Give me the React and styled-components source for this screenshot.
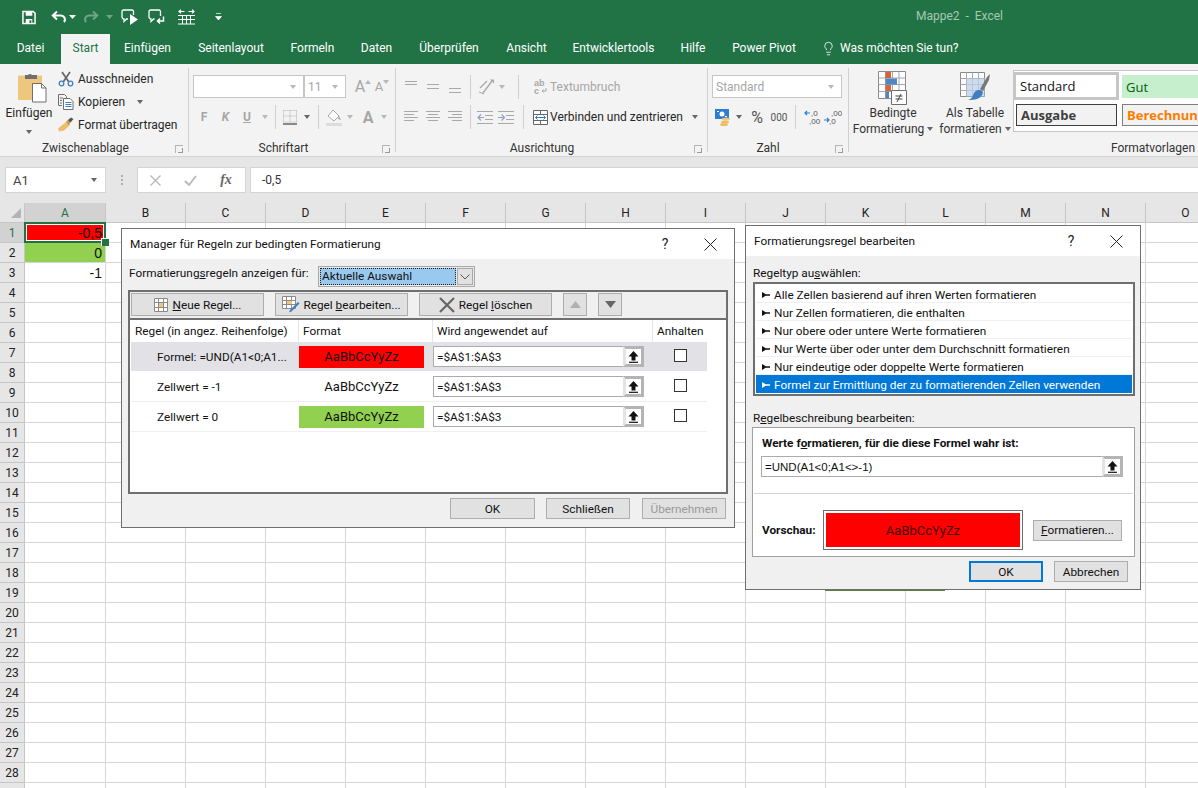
import React from "react";
import styled, { createGlobalStyle } from "styled-components";
import { Lightbulb } from "lucide-react";

const UI_FONT = `Roboto, "Open Sans", sans-serif`;

const GlobalStyle = createGlobalStyle`
  html, body {
    margin: 0;
    padding: 0;
    background: #fff;
    font-family: ${UI_FONT};
    font-size: 12px;
    color: #262626;
    overflow: hidden;
  }
  * { box-sizing: border-box; }
`;

const Page = styled.div`
  position: relative;
  width: 1198px;
  height: 788px;
  overflow: hidden;
`;

/* ---------- title + tabs ---------- */

const TitleBar = styled.div`
  height: 34px;
  background: #217346;
  display: flex;
  align-items: center;
  color: #fff;
`;

const QuickSlot = styled.div`
  width: ${(p) => p.$w}px;
  padding-left: ${(p) => p.$pl || 0}px;
  display: flex;
  justify-content: center;
  align-items: center;
  opacity: ${(p) => (p.$dim ? 0.35 : 1)};
`;

const WindowTitle = styled.div`
  margin-left: auto;
  margin-right: 195px;
  padding-bottom: 2px;
  color: #a6c9b5;
  white-space: pre;
  font-size: 12px;
`;

const TabBar = styled.div`
  height: 30px;
  background: #217346;
  display: flex;
  align-items: stretch;
`;

const Tab = styled.div`
  width: ${(p) => p.$w}px;
  display: flex;
  align-items: center;
  justify-content: center;
  padding-bottom: 2px;
  white-space: nowrap;
  color: ${(p) => (p.$active ? "#217346" : "#fff")};
  background: ${(p) => (p.$active ? "#f3f3f3" : "transparent")};
`;

const TellMe = styled.div`
  margin-left: 12px;
  display: flex;
  align-items: center;
  gap: 4px;
  padding-bottom: 2px;
  color: #fff;
  white-space: nowrap;
`;

/* ---------- ribbon ---------- */

const Ribbon = styled.div`
  height: 93px;
  background: #f3f3f3;
  border-bottom: 1px solid #d2d2d2;
  display: flex;
  overflow: hidden;
`;

const Group = styled.div`
  position: relative;
  flex: 0 0 ${(p) => p.$w}px;
  min-width: 0;
  height: 92px;
  display: flex;
  flex-direction: column;
  &::after {
    content: "";
    display: ${(p) => (p.$noLine ? "none" : "block")};
    position: absolute;
    right: 0;
    top: 4px;
    bottom: 4px;
    width: 1px;
    background: #d0d0d0;
  }
`;

const GroupBody = styled.div`
  flex: 1;
  display: flex;
  min-height: 0;
`;

const GroupLabel = styled.div`
  height: 18px;
  line-height: 20px;
  text-align: center;
  color: #333;
  white-space: nowrap;
  padding-right: ${(p) => p.$pr || 0}px;
  padding-left: ${(p) => p.$pl || 0}px;
`;

const Launcher = styled.div`
  position: absolute;
  right: 6px;
  bottom: 3px;
  width: 8px;
  height: 8px;
  border: 1px solid #b5b5b5;
  border-width: 1px 0 0 1px;
  &::after {
    content: "";
    position: absolute;
    right: 0;
    bottom: 0;
    width: 4px;
    height: 4px;
    border: 1px solid #9a9a9a;
    border-width: 0 1px 1px 0;
  }
`;

const Caret = styled.span`
  display: inline-block;
  width: 0;
  height: 0;
  margin-left: ${(p) => p.$ml || 0}px;
  border-left: 3.5px solid transparent;
  border-right: 3.5px solid transparent;
  border-top: 4px solid ${(p) => (p.$dim ? "#b8b8b8" : "#666")};
`;

const PasteButton = styled.div`
  width: 58px;
  display: flex;
  flex-direction: column;
  align-items: center;
  padding-top: 7px;
  color: #262626;
  & > svg { margin-left: 6px; }
`;

const PasteLabel = styled.div`
  margin-top: 2px;
  line-height: 17px;
`;

const PasteCaret = styled.div`
  line-height: 10px;
  margin-top: 3px;
`;

const ClipActions = styled.div`
  display: flex;
  flex-direction: column;
  padding-top: 3px;
`;

const ClipAction = styled.div`
  height: 23px;
  display: flex;
  align-items: center;
  gap: 4px;
  white-space: nowrap;
  & > svg:first-child { flex: 0 0 16px; }
`;

const ToolStack = styled.div`
  display: flex;
  flex-direction: column;
  padding: 11px 0 0 ${(p) => p.$pl || 0}px;
`;

const ToolRow = styled.div`
  height: ${(p) => p.$h || 23}px;
  margin-top: ${(p) => p.$mt || 0}px;
  display: flex;
  align-items: center;
`;

const Slot = styled.div`
  flex: 0 0 ${(p) => p.$w}px;
  height: 100%;
  display: flex;
  align-items: center;
  justify-content: center;
  color: ${(p) => (p.$dim ? "#a6a6a6" : "#555")};
  font-weight: ${(p) => (p.$bold ? 700 : 400)};
  font-style: ${(p) => (p.$italic ? "italic" : "normal")};
  text-decoration: ${(p) => (p.$under ? "underline" : "none")};
  font-size: ${(p) => p.$fs || 12}px;
`;

const RowSep = styled.div`
  flex: 0 0 ${(p) => p.$w}px;
  height: 24px;
  position: relative;
  &::after {
    content: "";
    position: absolute;
    left: 50%;
    top: 0;
    bottom: 0;
    width: 1px;
    background: #d0d0d0;
  }
`;

const RibbonBox = styled.div`
  width: ${(p) => p.$w}px;
  height: 23px;
  background: #fff;
  border: 1px solid #c6c6c6;
  display: flex;
  align-items: center;
  justify-content: space-between;
  padding: 0 7px 0 3px;
  color: #a6a6a6;
`;

const WrapText = styled.div`
  color: #a6a6a6;
  white-space: nowrap;
`;

const MergeText = styled.div`
  color: #262626;
  white-space: nowrap;
`;

const BigButton = styled.div`
  flex: 0 0 ${(p) => p.$w}px;
  display: flex;
  flex-direction: column;
  align-items: center;
  padding-top: ${(p) => p.$pt || 6}px;
  line-height: 16px;
  color: #333;
  white-space: nowrap;
`;

const BigLine = styled.div`
  display: flex;
  align-items: center;
  gap: 3px;
  margin-top: ${(p) => p.$mt || 0}px;
`;

const Gallery = styled.div`
  margin-top: 6px;
  flex: 1;
  height: 62px;
  background: #fff;
  border: 1px solid #c6c6c6;
  border-right: 0;
  display: grid;
  grid-template-columns: 106px 110px;
  grid-template-rows: 30px 28px;
  overflow: hidden;
`;

const StyleCell = styled.div`
  margin: ${(p) => p.$m};
  padding-left: 4px;
  display: flex;
  align-items: center;
  white-space: nowrap;
  font-family: "Open Sans", sans-serif;
  font-size: 13px;
  font-weight: ${(p) => (p.$bold ? 700 : 400)};
  color: ${(p) => p.$color};
  background: ${(p) => p.$bg};
  border: ${(p) => p.$border};
`;

/* ---------- formula bar ---------- */

const FormulaArea = styled.div`
  height: 46px;
  background: #e6e6e6;
  padding-top: 10px;
  display: flex;
  align-items: flex-start;
`;

const NameBox = styled.div`
  margin-left: 5px;
  width: 101px;
  height: 26px;
  background: #fff;
  border: 1px solid #d4d4d4;
  display: flex;
  align-items: center;
  justify-content: space-between;
  padding: 0 8px 0 7px;
  font-size: 13px;
  color: #444;
`;

const Dots = styled.div`
  width: 31px;
  height: 26px;
  display: flex;
  flex-direction: column;
  align-items: center;
  justify-content: center;
  gap: 2px;
  & > i {
    width: 2px;
    height: 2px;
    background: #b0b0b0;
  }
`;

const FxBox = styled.div`
  width: 109px;
  height: 26px;
  background: #fff;
  border: 1px solid #d4d4d4;
  display: flex;
  align-items: center;
`;

const FxSlot = styled.div`
  flex: 0 0 ${(p) => p.$w}px;
  display: flex;
  justify-content: center;
  align-items: center;
`;

const FxText = styled.span`
  font-family: "Liberation Serif", serif;
  font-style: italic;
  font-weight: 700;
  font-size: 14px;
  color: #666;
`;

const FormulaInput = styled.div`
  margin-left: 4px;
  flex: 1;
  height: 26px;
  background: #fff;
  border: 1px solid #d4d4d4;
  border-right: 0;
  display: flex;
  align-items: center;
  padding-left: 11px;
  color: #333;
`;

/* ---------- sheet ---------- */

const Sheet = styled.div`
  display: grid;
  grid-template-columns: 25px 81px repeat(14, 80px);
  grid-auto-rows: 20px;
  background: #fff;
`;

const Corner = styled.div`
  background: #e6e6e6;
  border-right: 1px solid #c6c6c6;
  border-bottom: 1px solid #c6c6c6;
  position: relative;
  &::after {
    content: "";
    position: absolute;
    right: 3px;
    bottom: 4px;
    width: 0;
    height: 0;
    border-left: 10px solid transparent;
    border-bottom: 10px solid #b4b4b4;
  }
`;

const ColHead = styled.div`
  background: ${(p) => (p.$active ? "#d2d2d2" : "#e6e6e6")};
  color: ${(p) => (p.$active ? "#217346" : "#222")};
  border-right: 1px solid #c6c6c6;
  border-bottom: 1px solid #c6c6c6;
  display: flex;
  align-items: center;
  justify-content: center;
  font-size: 12px;
`;

const RowHead = styled(ColHead)``;

const Cell = styled.div`
  border-right: 1px solid #d6d6d6;
  border-bottom: 1px solid #d6d6d6;
  background: ${(p) => p.$bg || "#fff"};
  display: flex;
  align-items: center;
  justify-content: flex-end;
  padding-right: 3px;
  font-family: "Liberation Sans", sans-serif;
  font-size: 14px;
  color: #111;
`;

const ActiveCell = styled(Cell)`
  position: relative;
  z-index: 1;
  &::before {
    content: "";
    position: absolute;
    inset: -1px;
    border: 2px solid #217346;
    outline: 1px solid #fff;
    outline-offset: -3px;
  }
  &::after {
    content: "";
    position: absolute;
    right: -4px;
    bottom: -4px;
    width: 7px;
    height: 7px;
    background: #217346;
    border: 1px solid #fff;
    border-width: 1px 0 0 1px;
  }
`;

/* ---------- dialogs ---------- */

const Dialog = styled.div`
  position: absolute;
  left: ${(p) => p.$left}px;
  top: ${(p) => p.$top}px;
  width: ${(p) => p.$w}px;
  height: ${(p) => p.$h}px;
  background: #f0f0f0;
  border: 1px solid #6f6f6f;
  font-size: 11.8px;
  z-index: 5;
  display: flex;
  flex-direction: column;
`;

const DialogTitle = styled.div`
  flex: 0 0 30px;
  background: #fff;
  display: flex;
  align-items: center;
  padding-left: 8px;
  color: #111;
`;

const TitleText = styled.div`
  flex: 1;
`;

const HelpMark = styled.div`
  width: 20px;
  margin-right: 11px;
  text-align: center;
  font-size: 14px;
  color: #222;
`;

const CloseSlot = styled.div`
  width: 48px;
  display: flex;
  justify-content: center;
`;

const Key = styled.span`
  text-decoration: underline;
`;

const FilterRow = styled.div`
  flex: 0 0 31px;
  display: flex;
  align-items: flex-start;
  padding: 7px 0 0 7px;
  color: #111;
  white-space: nowrap;
`;

const FilterLabel = styled.div`
  width: 189px;
  line-height: 14px;
`;

const FilterSelect = styled.div`
  width: 157px;
  height: 21px;
  border: 1px solid #a9a9a9;
  background: #e8e8e8;
  display: flex;
  padding: 1px;
`;

const FilterValue = styled.div`
  flex: 1;
  background: #99c9ef;
  outline: 1px dotted #222;
  outline-offset: -1px;
  padding-left: 2px;
  line-height: 17px;
  color: #111;
`;

const FilterArrow = styled.div`
  width: 16px;
  margin-left: 1px;
  background: #e1e1e1;
  border: 1px solid #a9a9a9;
  display: flex;
  align-items: center;
  justify-content: center;
`;

const RuleBox = styled.div`
  margin: 0 6px;
  height: 204px;
  flex: none;
  border: 2px solid #6f6f6f;
  display: flex;
  flex-direction: column;
`;

const RuleToolbar = styled.div`
  height: 28px;
  flex: none;
  display: flex;
  align-items: flex-start;
  padding: 1px 0 0 1px;
  border-bottom: 2px solid #6f6f6f;
`;

const DlgButton = styled.div`
  width: ${(p) => p.$w}px;
  height: ${(p) => p.$h || 21}px;
  margin-left: ${(p) => p.$ml || 0}px;
  flex: none;
  background: #e1e1e1;
  border: ${(p) => (p.$focus ? "2px solid #0078d7" : "1px solid #adadad")};
  display: flex;
  align-items: center;
  justify-content: center;
  gap: ${(p) => p.$gap || 0}px;
  color: ${(p) => (p.$off ? "#9a9a9a" : "#111")};
  white-space: nowrap;
`;

const RuleList = styled.div`
  flex: 1;
  background: #fff;
  padding-left: 1px;
`;

const RuleGrid = styled.div`
  width: 576px;
  display: grid;
  grid-template-columns: 168px 134px 220px 54px;
`;

const HeadCell = styled.div`
  height: 22px;
  padding-left: 4px;
  display: flex;
  align-items: center;
  border-right: ${(p) => (p.$last ? "0" : "1px solid #e4e4e4")};
  color: #111;
  white-space: nowrap;
`;

const RuleRow = styled.div`
  grid-column: 1 / -1;
  height: 30px;
  display: grid;
  grid-template-columns: subgrid;
  align-items: center;
  background: ${(p) => (p.$selected ? "#e1e1e6" : "#fff")};
  border-bottom: 1px solid ${(p) => (p.$selected ? "#fff" : "#efefef")};
`;

const RuleName = styled.div`
  padding-left: 26px;
  color: #111;
  white-space: nowrap;
`;

const Sample = styled.div`
  width: 125px;
  height: 22px;
  display: flex;
  align-items: center;
  justify-content: center;
  background: ${(p) => p.$bg || "transparent"};
  color: #111;
  font-size: 13px;
`;

const RefInput = styled.div`
  width: ${(p) => p.$w}px;
  height: 21px;
  flex: none;
  margin-left: ${(p) => p.$ml || 0}px;
  background: #fff;
  border: 1px solid #ababab;
  display: flex;
  align-items: center;
  padding-left: 3px;
  color: #111;
  font-family: ${(p) => (p.$plain ? `"Liberation Sans", sans-serif` : "inherit")};
  font-size: ${(p) => (p.$plain ? "11.5px" : "inherit")};
`;

const RefText = styled.div`
  flex: 1;
  white-space: nowrap;
`;

const RefPick = styled.div`
  width: 21px;
  height: 21px;
  margin-right: -1px;
  background: #fff;
  border: 3px solid #b4b4b4;
  border-left-color: #e4e4e4;
  display: flex;
  align-items: center;
  justify-content: center;
`;

const Tick = styled.div`
  width: 13px;
  height: 13px;
  margin-left: 21px;
  margin-bottom: 2px;
  background: #fff;
  border: 1px solid #333;
`;

const DialogFooter = styled.div`
  display: flex;
  justify-content: flex-end;
  padding: ${(p) => p.$pad};
`;

const FieldLabel = styled.div`
  margin: ${(p) => p.$m};
  line-height: 16px;
  color: #111;
`;

const TypeList = styled.div`
  margin: 1px 0 0 7px;
  width: 382px;
  height: 114px;
  flex: none;
  background: #fff;
  border: 2px solid #6f6f6f;
  padding: 1px 1px 0;
`;

const TypeRow = styled.div`
  height: 18px;
  display: flex;
  align-items: center;
  padding: 2px 0 0 6px;
  gap: 4px;
  white-space: nowrap;
  color: ${(p) => (p.$selected ? "#fff" : "#111")};
  background: ${(p) => (p.$selected ? "#0078d7" : "#fff")};
  border-bottom: 1px solid ${(p) => (p.$selected ? "#0078d7" : "#f0f0f0")};
`;

const DescBox = styled.div`
  margin: 1px 0 0 6px;
  width: 383px;
  height: 130px;
  flex: none;
  background: #fff;
  border: 1px solid #a0a0a0;
  display: flex;
  flex-direction: column;
`;

const DescTitle = styled.div`
  padding: 7px 0 0 9px;
  line-height: 16px;
  font-weight: 700;
  color: #111;
`;

const DescRule = styled.div`
  height: 1px;
  margin: 16px 1px 0;
  background: #d4d4d4;
`;

const DescInput = styled(RefInput)`
  margin-top: 5px;
`;

const PreviewRow = styled.div`
  display: flex;
  align-items: center;
  padding: 16px 0 0 9px;
`;

const PreviewLabel = styled.div`
  width: 61px;
  font-weight: 700;
  color: #111;
`;

const PreviewFrame = styled.div`
  width: 200px;
  height: 40px;
  padding: 2px;
  background: #fff;
  border: 1px solid #6f6f6f;
  margin-right: 10px;
`;

const PreviewFill = styled.div`
  height: 100%;
  background: #f00;
  display: flex;
  align-items: center;
  justify-content: center;
  color: #400;
  font-size: 13px;
`;

const PartialEdge = styled.div`
  position: absolute;
  left: 825px;
  top: 590px;
  width: 120px;
  height: 1px;
  background: #5f7f3f;
  z-index: 4;
`;

/* ---------- icons ---------- */

const SaveIcon = () => (
  <svg width="15" height="15" viewBox="0 0 15 15">
    <path d="M1 1h11l2 2v11H1z" fill="none" stroke="#fff" strokeWidth="1.6" />
    <path d="M4 1.500h7v4H4zM4 9h7v5H4z" fill="#fff" />
    <path d="M8 10.500h2v3H8z" fill="#217346" />
  </svg>
);

const UndoIcon = () => (
  <svg width="16" height="14" viewBox="0 0 16 14">
    <path d="M6 1.500 1.800 5.500 6 9.500M2.500 5.500h7a4 4 0 0 1 3.500 6.500" fill="none" stroke="#fff" strokeWidth="2" />
  </svg>
);

const RedoIcon = () => (
  <svg width="16" height="14" viewBox="0 0 16 14">
    <path d="M10 1.500 14.200 5.500 10 9.500M13.500 5.500h-7A4 4 0 0 0 3 12" fill="none" stroke="#fff" strokeWidth="2" />
  </svg>
);

const CommentPlayIcon = () => (
  <svg width="18" height="16" viewBox="0 0 18 16">
    <path d="M2.500 1h8.500a1.500 1.500 0 0 1 1.500 1.500V6M7 10H5.500L3 12.500V10A2 2 0 0 1 1 8V2.500A1.500 1.500 0 0 1 2.500 1" fill="none" stroke="#fff" strokeWidth="1.300" />
    <path d="M9 5l8 5.500-8 5.500z" fill="#fff" />
  </svg>
);

const CommentBackIcon = () => (
  <svg width="18" height="16" viewBox="0 0 18 16">
    <path d="M2.500 1h8.500A1.500 1.500 0 0 1 12.500 2.500V7M6.500 10H5.500L3 12.500V10A2 2 0 0 1 1 8V2.500A1.500 1.500 0 0 1 2.500 1" fill="none" stroke="#fff" strokeWidth="1.300" />
    <path d="M15.500 7.500v4.500H10M12 9.500 9.500 12l2.500 2.500" fill="none" stroke="#fff" strokeWidth="1.500" />
  </svg>
);

const TableArrowsIcon = () => (
  <svg width="17" height="16" viewBox="0 0 17 16">
    <path d="M0 6.500h17M0 10.500h17M0 15h17M4.500 6.500V15M8.500 6.500V15M12.500 6.500V15" stroke="#fff" fill="none" />
    <path d="M1 2.500h5.500M3 .7 1 2.500l2 1.800M16 2.500h-5.500M14 .7l2 1.800-2 1.800" stroke="#fff" fill="none" strokeWidth="1.200" />
  </svg>
);

const QatMoreIcon = () => (
  <svg width="7" height="8" viewBox="0 0 7 8">
    <path d="M1 .5h5M.5 3.500h6l-3 3.500z" fill="#fff" stroke="#fff" strokeWidth=".7" />
  </svg>
);

const WhiteCaret = () => (
  <svg width="7" height="4" viewBox="0 0 7 4">
    <path d="M0 0h7L3.500 4z" fill="#fff" />
  </svg>
);

const PasteIcon = () => (
  <svg width="30" height="32" viewBox="0 0 30 32">
    <path d="M1 4.500h24V29H1z" fill="#eec77e" />
    <path d="M8 4h3a2.500 2.500 0 0 1 4 0h5v4H8z" fill="#6f6f6f" />
    <path d="M15.500 12.500h9l4.500 4.500v14H15.500z" fill="#fff" stroke="#6f6f6f" />
    <path d="M24.500 12.500V17H29" fill="none" stroke="#6f6f6f" />
  </svg>
);

const ScissorsIcon = () => (
  <svg width="16" height="16" viewBox="0 0 16 16">
    <path d="M4 1l6.500 9.500M12 1 5.500 10.500" stroke="#666" strokeWidth="1.700" fill="none" />
    <circle cx="3.500" cy="12.500" r="2.300" fill="none" stroke="#3f7fc1" strokeWidth="1.300" />
    <circle cx="12.500" cy="12.500" r="2.300" fill="none" stroke="#3f7fc1" strokeWidth="1.300" />
  </svg>
);

const CopyIcon = () => (
  <svg width="16" height="16" viewBox="0 0 16 16">
    <path d="M.5.500h6l2 2V4M.5.500V11.500H4" fill="none" stroke="#6f6f6f" />
    <path d="M5.500 4.500h6.500l3 3v8h-9.500z" fill="#fff" stroke="#6f6f6f" />
    <path d="M7.500 8.500h6M7.500 10.500h6M7.500 12.500h6" stroke="#3f7fc1" />
    <path d="M2 4h3M2 6.500h2M2 9h2" stroke="#6f6f6f" />
  </svg>
);

const BrushIcon = () => (
  <svg width="16" height="15" viewBox="0 0 16 15">
    <path d="M8 5 11 9 6 13.500 1 14.500 0 11.500z" fill="#edbd6b" />
    <path d="M8 5 10 2.500 12.500 5 11 9z" fill="#c79a4e" />
    <path d="M10 3 13 .5 15.500 2 12.500 5.500z" fill="#555" />
  </svg>
);

const GrowA = ({ shrink }) => (
  <Slot $w={shrink ? 18 : 20} $dim $fs={shrink ? 13 : 16}>
    A
    <svg width="6" height="4" viewBox="0 0 6 4" style={{ marginTop: -10 }}>
      <path d={shrink ? "M0 0h6L3 4z" : "M0 4h6L3 0z"} fill="#b8b8b8" />
    </svg>
  </Slot>
);

const Lines = ({ rows }) => (
  <svg width="16" height="14" viewBox="0 0 16 14">
    {rows.map(([y, x1, x2]) => (
      <path key={y} d={`M${x1} ${y}.5H${x2}`} stroke="#a8a8a8" />
    ))}
  </svg>
);

const OrientIcon = () => (
  <svg width="17" height="16" viewBox="0 0 17 16">
    <path d="M2 9 9 2M14 2 5 14" stroke="#a8a8a8" strokeWidth="1.300" fill="none" />
    <path d="M12 .5h4v4z" fill="#a8a8a8" />
    <path d="M1 13l5 2" stroke="#a8a8a8" />
  </svg>
);

const WrapIcon = () => (
  <svg width="13" height="16" viewBox="0 0 13 16">
    <text x="0" y="7" fontSize="9" fontWeight="700" fill="#a8a8a8" fontFamily="Liberation Sans">ab</text>
    <text x="0" y="15" fontSize="9" fontWeight="700" fill="#a8a8a8" fontFamily="Liberation Sans">c</text>
    <path d="M12 9v3H8M9.500 10.500 8 12l1.500 1.500" stroke="#a8a8a8" fill="none" />
  </svg>
);

const IndentIcon = ({ out }) => (
  <svg width="16" height="13" viewBox="0 0 16 13">
    <path d="M0 .5h16M8 4.500h8M8 8.500h8M0 12.500h16" stroke="#a8a8a8" />
    {out ? (
      <path d="M7 6.500H1M4 3.500l-3 3 3 3" stroke="#8aa6c6" strokeWidth="1.200" fill="none" />
    ) : (
      <path d="M0 6.500h6M3.500 3.500l3 3-3 3" stroke="#8aa6c6" strokeWidth="1.200" fill="none" />
    )}
  </svg>
);

const MergeIcon = () => (
  <svg width="15" height="15" viewBox="0 0 15 15">
    <path d="M.5.500h14v14H.5zM.5 4.500h14M.5 10.500h14M7.500.5v4M7.500 10.500v4" fill="#fff" stroke="#666" />
    <path d="M2.500 7.500h10" stroke="#2b7cd3" />
    <path d="M4.500 5.500l-2 2 2 2M10.500 5.500l2 2-2 2" stroke="#2b7cd3" fill="none" />
  </svg>
);

const BorderIcon = () => (
  <svg width="14" height="15" viewBox="0 0 14 15">
    <path d="M.5.500h13M.5 6h13M.5 12h13M.5.500V12M7 .5V12M13.500.5V12" stroke="#b0b0b0" strokeDasharray="1 1" fill="none" />
    <path d="M0 14h14" stroke="#666" strokeWidth="1.500" />
  </svg>
);

const FillIcon = () => (
  <svg width="17" height="17" viewBox="0 0 17 17">
    <path d="M7 1 13 7 8 12 2 7z" fill="#fff" stroke="#a8a8a8" />
    <path d="M13 7l2 4-3-1z" fill="#a8a8a8" />
    <path d="M0 14h16v3H0z" fill="#dcdcdc" />
  </svg>
);

const CurrencyIcon = () => (
  <svg width="16" height="17" viewBox="0 0 16 17">
    <path d="M0 0h14v10H0z" fill="#2b7cd3" />
    <circle cx="7" cy="5" r="2.500" fill="#fff" />
    <path d="M2 2h2v1H2zM10 7h2v1h-2z" fill="#fff" />
    <ellipse cx="11" cy="10" rx="4" ry="1.500" fill="#f0c67a" />
    <ellipse cx="10" cy="13" rx="4" ry="1.500" fill="#eebd63" />
    <ellipse cx="9" cy="15.500" rx="4" ry="1.500" fill="#eebd63" />
  </svg>
);

const DecimalIcon = ({ down }) => (
  <svg width="19" height="16" viewBox="0 0 19 16">
    <text x="8" y="7" fontSize="8" fill="#555" fontFamily="Liberation Sans">{down ? ",00" : ",0"}</text>
    <text x="6" y="15" fontSize="8" fill="#555" fontFamily="Liberation Sans">{down ? ",0" : ",00"}</text>
    <path d={down ? "M1 11h5M4 9l2 2-2 2" : "M7 4H2M4 2 2 4l2 2"} stroke="#2b7cd3" strokeWidth="1.200" fill="none" />
  </svg>
);

const CondFormatIcon = () => (
  <svg width="30" height="36" viewBox="0 0 30 36">
    <path d="M.5.500h27v27H.5z" fill="#fff" stroke="#8a8a8a" />
    <path d="M7.500.5v27M14.500.5v27M21 .5v27M.5 7h27M.5 13.500h27M.5 20.500h27" stroke="#a6a6a6" />
    <path d="M7.500 1H13v6H7.500zM7.500 14H13v6H7.500z" fill="#d9623b" />
    <path d="M7.500 7.500H19v6H7.500zM7.500 20.500H11V27H7.500z" fill="#4f86c6" />
    <path d="M13.500 19.500h15v14h-15z" fill="#fff" stroke="#6f6f6f" />
    <path d="M17.500 25h7M17.500 28h7M19 31l4-8" stroke="#444" />
  </svg>
);

const TableBrushIcon = () => (
  <svg width="30" height="36" viewBox="0 0 30 36">
    <path d="M.5 1.500h24v24H.5z" fill="#fff" stroke="#8a8a8a" />
    <path d="M6.500 1.500v24M12.500 1.500v24M18.500 1.500v24M.5 7.500h24M.5 13.500h24M.5 19.500h24" stroke="#a6a6a6" />
    <path d="M6.500 7.500h18v18h-18z" fill="#bcd0ea" opacity=".75" />
    <path d="M20 18 27 6l3-3-1 6-6 11z" fill="#777" />
    <path d="M19 19c3 0 5 2 3 5-2 4-7 5-14 5 3-1 4-2 5-5 1-3 3-5 6-5z" fill="#3f7fc1" />
  </svg>
);

const CloseIcon = () => (
  <svg width="13" height="13" viewBox="0 0 13 13">
    <path d="M.5.500l12 12M12.500.5l-12 12" stroke="#222" />
  </svg>
);

const ChevronIcon = () => (
  <svg width="10" height="6" viewBox="0 0 10 6">
    <path d="M.5.500 5 5l4.500-4.500" fill="none" stroke="#555" />
  </svg>
);

const NewRuleIcon = () => (
  <svg width="14" height="14" viewBox="0 0 14 14">
    <path d="M.5.500h13v13H.5zM.5 4.500h13M.5 9.500h13M4.500.5v13M9.500.5v13" fill="#fff" stroke="#8a8a8a" />
    <path d="M5 5h4v4H5z" fill="#eec77e" />
  </svg>
);

const EditRuleIcon = () => (
  <svg width="18" height="17" viewBox="0 0 18 17">
    <path d="M.5.500h13v12H.5zM.5 4.500h13M.5 8.500h13M4.500.5v12M9.500.5v12" fill="#fff" stroke="#8a8a8a" />
    <path d="M5 5h5v3H5z" fill="#eec77e" />
    <path d="M16 6l1.500 1.500-8 8L7 16.500l1-2.500z" fill="#3f7fc1" />
  </svg>
);

const DeleteIcon = () => (
  <svg width="16" height="16" viewBox="0 0 16 16">
    <path d="M1 1l14 14M15 1 1 15" stroke="#666" strokeWidth="2.200" />
  </svg>
);

const Triangle = ({ up, color }) => (
  <svg width="11" height="7" viewBox="0 0 11 7">
    <path d={up ? "M0 7h11L5.500 0z" : "M0 0h11L5.500 7z"} fill={color} />
  </svg>
);

const PickIcon = () => (
  <svg width="11" height="12" viewBox="0 0 11 12">
    <path d="M5.500 0 10.500 5.500H7.500V9.500h-4V5.500H.5z" fill="#111" />
    <path d="M1 11.300h9" stroke="#111" strokeWidth="1.200" />
  </svg>
);

const TypeBullet = ({ light }) => (
  <svg width="8" height="6" viewBox="0 0 8 6">
    <path d="M0 0 5 3 0 6z M4 2.300h4v1.400H4z" fill={light ? "#fff" : "#111"} />
  </svg>
);

/* ---------- data ---------- */

const tabs = [
  ["Datei", 61], ["Start", 49], ["Einfügen", 75], ["Seitenlayout", 92], ["Formeln", 71],
  ["Daten", 57], ["Überprüfen", 88], ["Ansicht", 67], ["Entwicklertools", 107],
  ["Hilfe", 52], ["Power Pivot", 90],
];

const columns = "ABCDEFGHIJKLMNO".split("");
const rowNumbers = Array.from({ length: 29 }, (_, i) => i + 1);

const cellValues = {
  1: { text: "-0,5", bg: "#ff0000" },
  2: { text: "0", bg: "#92d050" },
  3: { text: "-1" },
};

const rules = [
  { name: "Formel: =UND(A1<0;A1...", bg: "#ff0000", selected: true },
  { name: "Zellwert = -1" },
  { name: "Zellwert = 0", bg: "#92d050" },
];

const ruleTypes = [
  "Alle Zellen basierend auf ihren Werten formatieren",
  "Nur Zellen formatieren, die enthalten",
  "Nur obere oder untere Werte formatieren",
  "Nur Werte über oder unter dem Durchschnitt formatieren",
  "Nur eindeutige oder doppelte Werte formatieren",
  "Formel zur Ermittlung der zu formatierenden Zellen verwenden",
];

const alignTop = [[1, 2, 14], [4, 2, 14]];
const alignMiddle = [[4, 2, 14], [8, 2, 14]];
const alignBottom = [[8, 2, 14], [12, 2, 14]];
const alignLeft = [[1, 1, 15], [4, 1, 11], [7, 1, 15], [10, 1, 11]];
const alignCenter = [[1, 1, 15], [4, 3, 13], [7, 1, 15], [10, 3, 13]];
const alignRight = [[1, 1, 15], [4, 5, 15], [7, 1, 15], [10, 5, 15]];

function RibbonBar() {
  return (
    <Ribbon>
      <Group $w={189}>
        <GroupBody>
          <PasteButton>
            <PasteIcon />
            <PasteLabel>Einfügen</PasteLabel>
            <PasteCaret><Caret /></PasteCaret>
          </PasteButton>
          <ClipActions>
            <ClipAction><ScissorsIcon />Ausschneiden</ClipAction>
            <ClipAction><CopyIcon />Kopieren<Caret $ml={8} /></ClipAction>
            <ClipAction><BrushIcon />Format übertragen</ClipAction>
          </ClipActions>
        </GroupBody>
        <GroupLabel $pr={18}>Zwischenablage</GroupLabel>
        <Launcher />
      </Group>

      <Group $w={207}>
        <GroupBody>
          <ToolStack $pl={4}>
            <ToolRow>
              <RibbonBox $w={111}><span /><Caret $dim /></RibbonBox>
              <RibbonBox $w={42}><span>11</span><Caret $dim /></RibbonBox>
              <Slot $w={7} />
              <GrowA />
              <GrowA shrink />
            </ToolRow>
            <ToolRow $h={26} $mt={6}>
              <Slot $w={22} $dim $bold>F</Slot>
              <Slot $w={21} $dim $bold $italic>K</Slot>
              <Slot $w={22} $dim $bold $under>U</Slot>
              <Slot $w={14}><Caret $dim /></Slot>
              <RowSep $w={6} />
              <Slot $w={24}><BorderIcon /></Slot>
              <Slot $w={10}><Caret /></Slot>
              <RowSep $w={12} />
              <Slot $w={20}><FillIcon /></Slot>
              <Slot $w={12}><Caret $dim /></Slot>
              <Slot $w={24} $dim $bold $fs={16}>A</Slot>
              <Slot $w={8}><Caret $dim /></Slot>
            </ToolRow>
          </ToolStack>
        </GroupBody>
        <GroupLabel $pr={18}>Schriftart</GroupLabel>
        <Launcher />
      </Group>

      <Group $w={312}>
        <GroupBody>
          <ToolStack $pl={3}>
            <ToolRow>
              <Slot $w={23}><Lines rows={alignTop} /></Slot>
              <Slot $w={22}><Lines rows={alignMiddle} /></Slot>
              <Slot $w={22}><Lines rows={alignBottom} /></Slot>
              <RowSep $w={8} />
              <Slot $w={24}><OrientIcon /></Slot>
              <Slot $w={8}><Caret $dim /></Slot>
              <RowSep $w={24} />
              <Slot $w={20}><WrapIcon /></Slot>
              <WrapText>Textumbruch</WrapText>
            </ToolRow>
            <ToolRow $h={26} $mt={6}>
              <Slot $w={23}><Lines rows={alignLeft} /></Slot>
              <Slot $w={22}><Lines rows={alignCenter} /></Slot>
              <Slot $w={22}><Lines rows={alignRight} /></Slot>
              <RowSep $w={8} />
              <Slot $w={21}><IndentIcon out /></Slot>
              <Slot $w={21}><IndentIcon /></Slot>
              <RowSep $w={14} />
              <Slot $w={20}><MergeIcon /></Slot>
              <MergeText>Verbinden und zentrieren</MergeText>
              <Slot $w={24}><Caret /></Slot>
            </ToolRow>
          </ToolStack>
        </GroupBody>
        <GroupLabel $pr={20}>Ausrichtung</GroupLabel>
        <Launcher />
      </Group>

      <Group $w={141}>
        <GroupBody>
          <ToolStack $pl={4}>
            <ToolRow>
              <RibbonBox $w={130}><span>Standard</span><Caret $dim /></RibbonBox>
            </ToolRow>
            <ToolRow $h={26} $mt={6}>
              <Slot $w={22}><CurrencyIcon /></Slot>
              <Slot $w={10}><Caret /></Slot>
              <Slot $w={26} $fs={16}>%</Slot>
              <Slot $w={18} $fs={10}>000</Slot>
              <RowSep $w={14} />
              <Slot $w={20}><DecimalIcon /></Slot>
              <Slot $w={21}><DecimalIcon down /></Slot>
            </ToolRow>
          </ToolStack>
        </GroupBody>
        <GroupLabel $pr={21}>Zahl</GroupLabel>
        <Launcher />
      </Group>

      <Group $w={350} $noLine>
        <GroupBody>
          <BigButton $w={88} $pt={7}>
            <CondFormatIcon />
            <BigLine $mt={-2}>Bedingte</BigLine>
            <BigLine>Formatierung<Caret /></BigLine>
          </BigButton>
          <BigButton $w={76} $pt={7}>
            <TableBrushIcon />
            <BigLine $mt={-2}>Als Tabelle</BigLine>
            <BigLine>formatieren<Caret /></BigLine>
          </BigButton>
          <Gallery>
            <StyleCell $m="1px 1px 1px -1px" $color="#111" $bg="#fff" $border="3px solid #c6c6c6">Standard</StyleCell>
            <StyleCell $m="4px 0 3px 2px" $color="#006100" $bg="#c6efce">Gut</StyleCell>
            <StyleCell $m="3px 3px 3px 2px" $color="#3f3f3f" $bg="#f2f2f2" $border="1px solid #3f3f3f" $bold>Ausgabe</StyleCell>
            <StyleCell $m="3px 0 3px 2px" $color="#fa7d00" $bg="#f2f2f2" $border="1px solid #7f7f7f" $bold>Berechnung</StyleCell>
          </Gallery>
        </GroupBody>
        <GroupLabel $pl={258}>Formatvorlagen</GroupLabel>
      </Group>
    </Ribbon>
  );
}

function ManagerDialog() {
  return (
    <Dialog $left={121} $top={228} $w={614} $h={300}>
      <DialogTitle>
        <TitleText>Manager für Regeln zur bedingten Formatierung</TitleText>
        <HelpMark>?</HelpMark>
        <CloseSlot><CloseIcon /></CloseSlot>
      </DialogTitle>
      <FilterRow>
        <FilterLabel>Formatierung<Key>s</Key>regeln anzeigen für:</FilterLabel>
        <FilterSelect>
          <FilterValue>Aktuelle Auswahl</FilterValue>
          <FilterArrow><ChevronIcon /></FilterArrow>
        </FilterSelect>
      </FilterRow>
      <RuleBox>
        <RuleToolbar>
          <DlgButton $w={133} $h={23} $gap={5}><NewRuleIcon /><span><Key>N</Key>eue Regel...</span></DlgButton>
          <DlgButton $w={133} $h={23} $ml={11} $gap={3}><EditRuleIcon /><span>Regel <Key>b</Key>earbeiten...</span></DlgButton>
          <DlgButton $w={133} $h={23} $ml={11} $gap={4}><DeleteIcon /><span>Regel <Key>l</Key>öschen</span></DlgButton>
          <DlgButton $w={24} $h={23} $ml={11}><Triangle up color="#b0b0b0" /></DlgButton>
          <DlgButton $w={24} $h={23} $ml={11}><Triangle color="#666" /></DlgButton>
        </RuleToolbar>
        <RuleList>
          <RuleGrid>
            <HeadCell>Regel (in angez. Reihenfolge)</HeadCell>
            <HeadCell>Format</HeadCell>
            <HeadCell>Wird angewendet auf</HeadCell>
            <HeadCell $last>Anhalten</HeadCell>
            {rules.map((rule) => (
              <RuleRow key={rule.name} $selected={rule.selected}>
                <RuleName>{rule.name}</RuleName>
                <Sample $bg={rule.bg}>AaBbCcYyZz</Sample>
                <RefInput $w={211}>
                  <RefText>=$A$1:$A$3</RefText>
                  <RefPick><PickIcon /></RefPick>
                </RefInput>
                <Tick />
              </RuleRow>
            ))}
          </RuleGrid>
        </RuleList>
      </RuleBox>
      <DialogFooter $pad="4px 8px 0 0">
        <DlgButton $w={85}>OK</DlgButton>
        <DlgButton $w={84} $ml={11}>Schließen</DlgButton>
        <DlgButton $w={84} $ml={12} $off>Übernehmen</DlgButton>
      </DialogFooter>
    </Dialog>
  );
}

function EditDialog() {
  return (
    <Dialog $left={745} $top={225} $w={396} $h={365}>
      <DialogTitle>
        <TitleText>Formatierungsregel bearbeiten</TitleText>
        <HelpMark>?</HelpMark>
        <CloseSlot><CloseIcon /></CloseSlot>
      </DialogTitle>
      <FieldLabel $m="9px 0 0 7px">Regeltyp au<Key>s</Key>wählen:</FieldLabel>
      <TypeList>
        {ruleTypes.map((type, i) => (
          <TypeRow key={type} $selected={i === 5}>
            <TypeBullet light={i === 5} />
            {type}
          </TypeRow>
        ))}
      </TypeList>
      <FieldLabel $m="14px 0 0 7px">R<Key>e</Key>gelbeschreibung bearbeiten:</FieldLabel>
      <DescBox>
        <DescTitle>Werte f<Key>o</Key>rmatieren, für die diese Formel wahr ist:</DescTitle>
        <DescInput $w={362} $ml={8} $plain>
          <RefText>=UND(A1&lt;0;A1&lt;&gt;-1)</RefText>
          <RefPick><PickIcon /></RefPick>
        </DescInput>
        <DescRule />
        <PreviewRow>
          <PreviewLabel>Vorschau:</PreviewLabel>
          <PreviewFrame><PreviewFill>AaBbCcYyZz</PreviewFill></PreviewFrame>
          <DlgButton $w={89}><span><Key>F</Key>ormatieren...</span></DlgButton>
        </PreviewRow>
      </DescBox>
      <DialogFooter $pad="4px 12px 0 0">
        <DlgButton $w={74} $focus>OK</DlgButton>
        <DlgButton $w={74} $ml={11}>Abbrechen</DlgButton>
      </DialogFooter>
    </Dialog>
  );
}

export default function App() {
  return (
    <Page>
      <GlobalStyle />
      <TitleBar>
        <QuickSlot $w={36} $pl={22}><SaveIcon /></QuickSlot>
        <QuickSlot $w={31} $pl={14}><UndoIcon /></QuickSlot>
        <QuickSlot $w={10}><WhiteCaret /></QuickSlot>
        <QuickSlot $w={24} $dim $pl={4}><RedoIcon /></QuickSlot>
        <QuickSlot $w={17} $dim><WhiteCaret /></QuickSlot>
        <QuickSlot $w={24}><CommentPlayIcon /></QuickSlot>
        <QuickSlot $w={30}><CommentBackIcon /></QuickSlot>
        <QuickSlot $w={28}><TableArrowsIcon /></QuickSlot>
        <QuickSlot $w={36}><QatMoreIcon /></QuickSlot>
        <WindowTitle>Mappe2  -  Excel</WindowTitle>
      </TitleBar>
      <TabBar>
        {tabs.map(([label, w]) => (
          <Tab key={label} $w={w} $active={label === "Start"}>{label}</Tab>
        ))}
        <TellMe>
          <Lightbulb size={15} strokeWidth={1.3} color="#fff" />
          Was möchten Sie tun?
        </TellMe>
      </TabBar>
      <RibbonBar />
      <FormulaArea>
        <NameBox>A1<Caret /></NameBox>
        <Dots><i /><i /><i /></Dots>
        <FxBox>
          <FxSlot $w={35}>
            <svg width="11" height="11" viewBox="0 0 11 11"><path d="M.5.500l10 10M10.500.5l-10 10" stroke="#b8b8b8" strokeWidth="1.300" /></svg>
          </FxSlot>
          <FxSlot $w={35}>
            <svg width="13" height="11" viewBox="0 0 13 11"><path d="M1 6l4 4 7-9" fill="none" stroke="#b8b8b8" strokeWidth="1.800" /></svg>
          </FxSlot>
          <FxSlot $w={36}><FxText>fx</FxText></FxSlot>
        </FxBox>
        <FormulaInput>-0,5</FormulaInput>
      </FormulaArea>
      <Sheet>
        <Corner />
        {columns.map((c) => (
          <ColHead key={c} $active={c === "A"}>{c}</ColHead>
        ))}
        {rowNumbers.map((row) => (
          <React.Fragment key={row}>
            <RowHead $active={row === 1}>{row}</RowHead>
            {columns.map((c) => {
              const value = c === "A" ? cellValues[row] : null;
              if (c === "A" && row === 1) {
                return <ActiveCell key={c} $bg={value.bg}>{value.text}</ActiveCell>;
              }
              return <Cell key={c} $bg={value?.bg}>{value?.text}</Cell>;
            })}
          </React.Fragment>
        ))}
      </Sheet>
      <ManagerDialog />
      <EditDialog />
      <PartialEdge />
    </Page>
  );
}
